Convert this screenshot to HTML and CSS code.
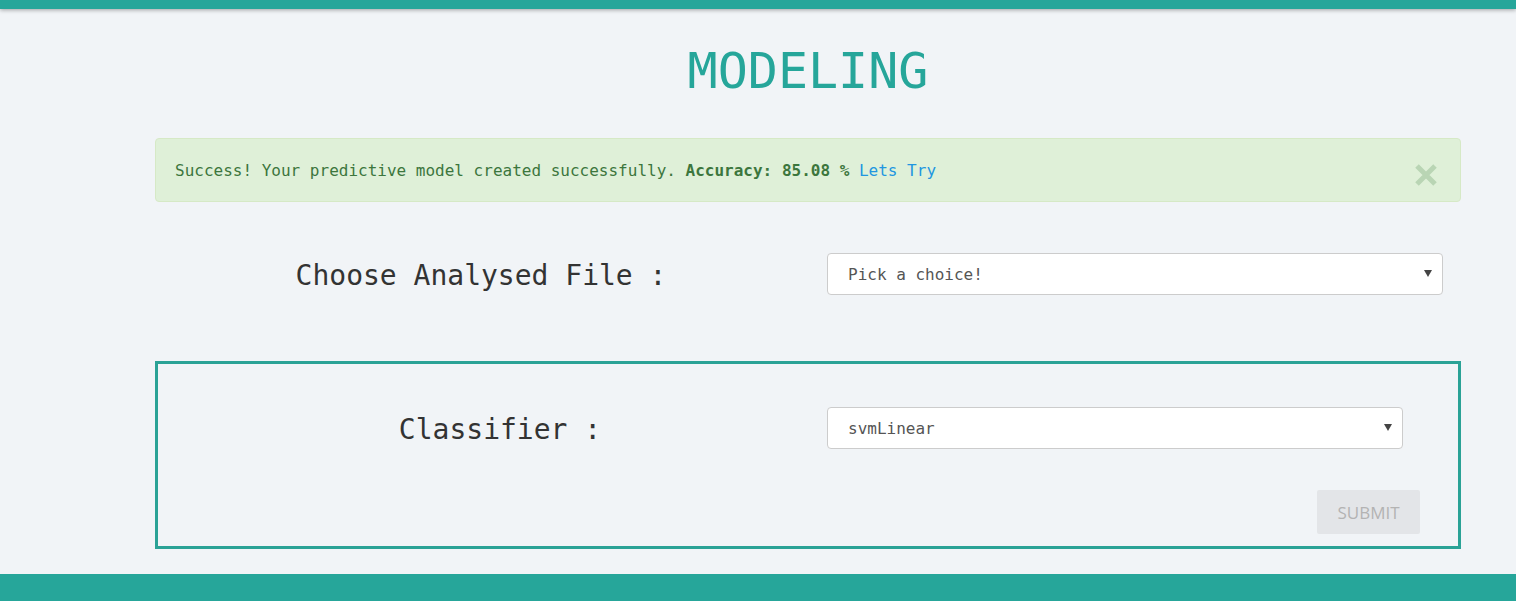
FILE: index.html
```html
<!DOCTYPE html>
<html lang="en">
<head>
<meta charset="utf-8">
<title>Modeling</title>
<link rel="stylesheet" href="styles.css">
</head>
<body>
<div class="topbar"></div>
<main class="container">
  <h1 class="title">MODELING</h1>
  <div class="alert">
    <p class="alert-text">Success! Your predictive model created successfully. <strong>Accuracy: 85.08 %</strong> <a href="#" class="alert-link">Lets Try</a></p>
    <button class="close" aria-label="Close">
      <svg width="24" height="24" viewBox="0 0 24 24"><path d="M3 3 L21 21 M21 3 L3 21" stroke="currentColor" stroke-width="5" stroke-linecap="butt"/></svg>
    </button>
  </div>
  <div class="row row-file">
    <div class="label label-file">Choose Analysed File :</div>
    <div class="select select-file">
      <span class="select-value">Pick a choice!</span>
      <svg class="arrow" width="8" height="7" viewBox="0 0 8 7"><path d="M0 0 H8 L4 7 Z" fill="#444"/></svg>
    </div>
  </div>
  <section class="box">
    <div class="row row-classifier">
      <div class="label label-classifier">Classifier :</div>
      <div class="select select-classifier">
        <span class="select-value">svmLinear</span>
        <svg class="arrow" width="8" height="7" viewBox="0 0 8 7"><path d="M0 0 H8 L4 7 Z" fill="#444"/></svg>
      </div>
    </div>
    <div class="actions">
      <button class="submit" disabled>SUBMIT</button>
    </div>
  </section>
</main>
<footer class="footer"></footer>
</body>
</html>
```

FILE: styles.css
```css
html, body {
  margin: 0;
  padding: 0;
}
body {
  background: #f1f4f7;
  font-family: "DejaVu Sans Mono", "Liberation Mono", monospace;
  color: #333;
  height: 601px;
  overflow: hidden;
}
.topbar {
  height: 9px;
  background: #26a69a;
  box-shadow: 0 1px 4px rgba(0, 0, 0, 0.35);
  position: relative;
  z-index: 1;
}
.container {
  display: flex;
  flex-direction: column;
  margin-left: 155px;
  width: 1306px;
}
.title {
  margin: 37px 0 0;
  font-size: 50px;
  line-height: 50px;
  font-weight: normal;
  color: #26a69a;
  text-align: center;
}
.alert {
  margin-top: 42px;
  height: 64px;
  box-sizing: border-box;
  display: flex;
  align-items: center;
  justify-content: space-between;
  background: #dff0d8;
  border: 1px solid #d6e9c6;
  border-radius: 4px;
  padding: 0 22px 0 19px;
  color: #3c763d;
}
.alert-text {
  margin: 2px 0 0;
  font-size: 16px;
  line-height: 22px;
}
.alert-text strong {
  font-weight: bold;
}
.alert-link {
  color: #2196e0;
  text-decoration: none;
}
.close {
  background: none;
  border: 0;
  padding: 0;
  margin-top: 9px;
  color: #b9d5b4;
  display: flex;
}
.row {
  display: flex;
  align-items: center;
  height: 42px;
}
.row-file {
  margin-top: 51px;
}
.label {
  font-size: 28px;
  text-align: center;
  box-sizing: border-box;
}
.label-file {
  width: 672px;
  padding-right: 20px;
  margin-top: 2px;
}
.label-classifier {
  width: 669px;
  padding-left: 15px;
  margin-top: 2px;
}
.select {
  height: 42px;
  box-sizing: border-box;
  background: #fff;
  border: 1px solid #ccc;
  border-radius: 4px;
  display: flex;
  align-items: center;
  justify-content: space-between;
  padding: 0 10px 0 20px;
  font-size: 16px;
  color: #555;
}
.select-file {
  width: 616px;
}
.select-classifier {
  width: 576px;
}
.arrow {
  display: block;
  margin-top: -1px;
}
.box {
  margin-top: 66px;
  border: 3px solid #2aa296;
  padding: 43px 0 11px;
  box-sizing: border-box;
  height: 188px;
}
.actions {
  display: flex;
  justify-content: flex-end;
  margin-top: 41px;
  padding-right: 38px;
}
.submit {
  width: 103px;
  height: 44px;
  border: 0;
  border-radius: 2px;
  background: #e3e5e8;
  color: #b3b3b3;
  font-family: "Open Sans", "Liberation Sans", sans-serif;
  font-size: 17px;
  padding: 0;
}
.footer {
  margin-top: 25px;
  height: 27px;
  background: #26a69a;
}
```
